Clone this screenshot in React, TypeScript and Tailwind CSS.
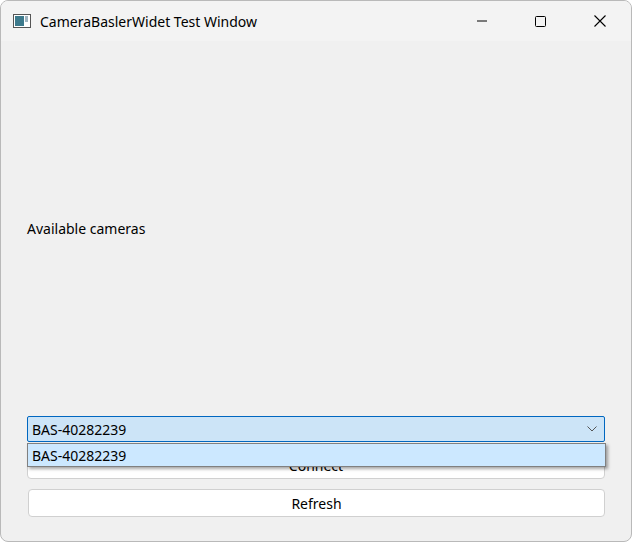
import React from 'react';

const App = () => {
	return (
		<div className="w-[633px] h-[543px] bg-white" style={{ fontFamily: '"Noto Sans", sans-serif' }}>
			<div className="w-[632px] h-[542px] flex flex-col rounded-lg border border-[#b9b9b9] bg-[#f0f0f0] overflow-hidden">
				{/* Title bar */}
				<div className="h-[40px] flex items-center bg-[#f3f3f3] shrink-0">
					<svg width="18" height="14" viewBox="0 0 18 14" className="ml-[12px]">
						<rect x="0.5" y="0.5" width="17" height="13" fill="#fff" stroke="#555" />
						<rect x="2" y="2" width="9" height="10" fill="#3d7a8c" />
						<rect x="12" y="2" width="3" height="6" fill="#9fb4c0" />
					</svg>
					<span className="ml-[9px] text-[14px] text-black">CameraBaslerWidet Test Window</span>
					<div className="ml-auto flex items-center h-full">
						<div className="w-[58px] h-full flex items-center justify-center">
							<svg width="10" height="10" viewBox="0 0 10 10"><line x1="0" y1="5" x2="10" y2="5" stroke="#000" strokeWidth="1" /></svg>
						</div>
						<div className="w-[58px] h-full flex items-center justify-center">
							<svg width="11" height="11" viewBox="0 0 11 11"><rect x="0.5" y="0.5" width="10" height="10" rx="1" fill="none" stroke="#000" /></svg>
						</div>
						<div className="w-[62px] h-full flex items-center justify-center">
							<svg width="12" height="12" viewBox="0 0 12 12"><path d="M0.5 0.5L11.5 11.5M11.5 0.5L0.5 11.5" stroke="#000" strokeWidth="1.1" /></svg>
						</div>
					</div>
				</div>

				{/* Content */}
				<div className="flex-1 flex flex-col px-[26px] pb-[24px]">
					<div className="flex-1 flex items-center">
						<span className="text-[14px] text-black">Available cameras</span>
					</div>
					<div className="relative">
						<div className="h-[26px] flex items-center border border-[#0067c0] rounded-[2px] bg-[#cce4f7] px-[4px] text-[14px] text-black">
							BAS-40282239
							<svg width="10" height="6" viewBox="0 0 10 6" className="ml-auto mr-[3px]"><path d="M0.5 0.5L5 5L9.5 0.5" fill="none" stroke="#555" /></svg>
						</div>
						<div className="absolute left-0 top-[27px] w-[579px] h-[24px] flex items-center border border-[#808080] bg-[#cce8ff] px-[4px] text-[14px] text-black shadow-[2px_2px_3px_rgba(0,0,0,0.35)] z-10">
							BAS-40282239
						</div>
						<div className="mt-[10px] h-[27px] flex items-center justify-center border border-[#d0d0d0] rounded-[4px] bg-white text-[14px] text-black">Connect</div>
						<div className="mt-[10px] h-[28px] flex items-center justify-center border border-[#d0d0d0] rounded-[4px] bg-white text-[14px] text-black ml-[1px]">Refresh</div>
					</div>
				</div>
			</div>
		</div>
	);
};

export default App;
